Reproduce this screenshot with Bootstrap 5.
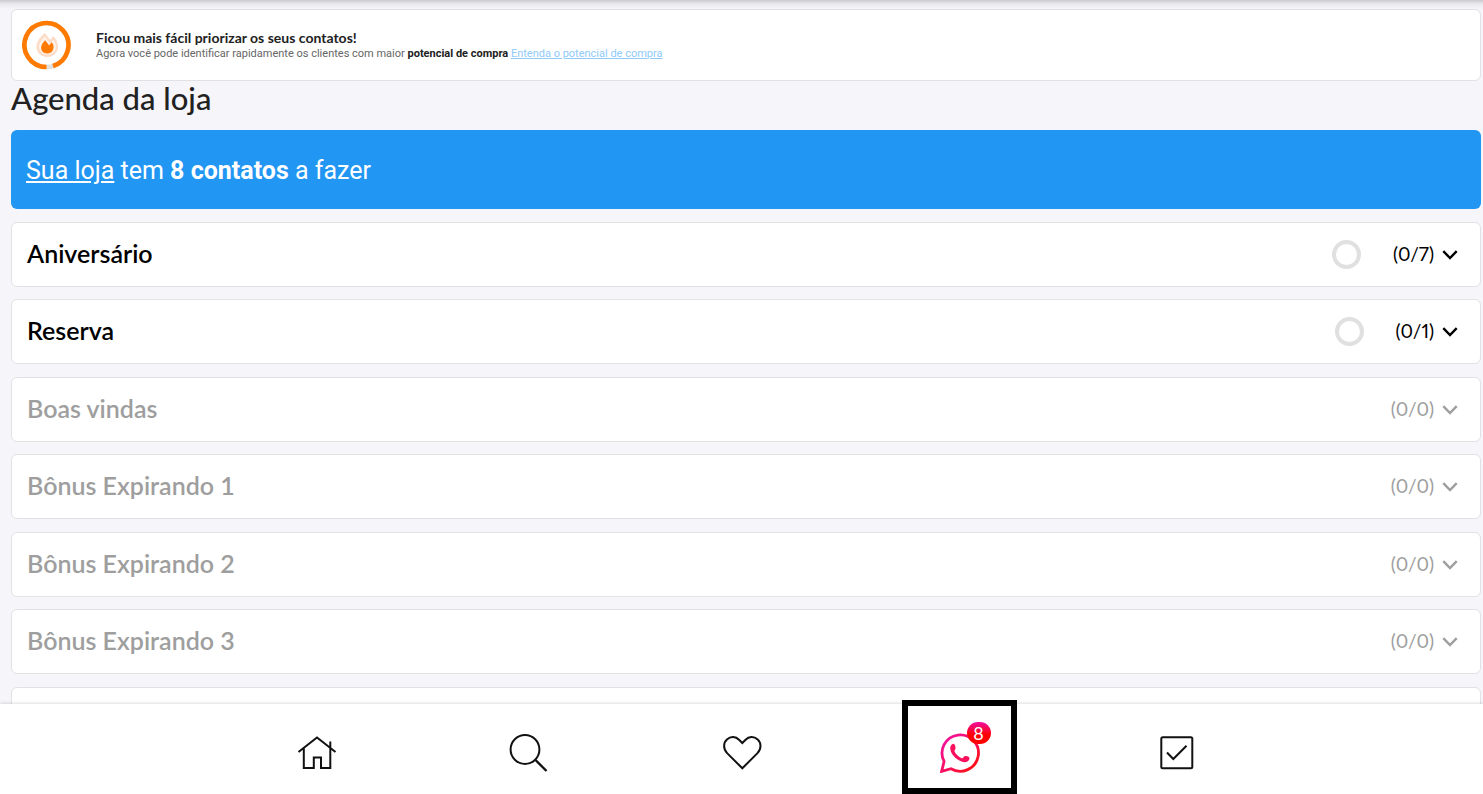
<!DOCTYPE html>
<html lang="pt-BR">
<head>
<meta charset="utf-8">
<meta name="viewport" content="width=device-width, initial-scale=1">
<title>Agenda da loja</title>
<link href="https://cdn.jsdelivr.net/npm/bootstrap@5.3.0/dist/css/bootstrap.min.css" rel="stylesheet">
<style>
  body { background: #f5f5fa; color: #212121; font-family: Lato, "Open Sans", sans-serif; }
  .agenda-main { min-height: 0; padding: 9px 2px 0 11px; scrollbar-width: none; }
  .agenda-main::-webkit-scrollbar { display: none; }
  .top-shade { height: 9px; background: linear-gradient(#cbcbd1, #e9e9ee 45%, #f5f5fa); }
  .panel { background: #fff; border: 1px solid #e2e2e4; border-radius: 6px; }
  .notice { height: 72px; padding: 0 10px; gap: 24px; }
  .notice-title { font-size: 14px; line-height: 16px; font-weight: 700; }
  .notice-text { font: 11px/15px Roboto, sans-serif; color: #666; }
  .notice-text strong { color: #212121; }
  .notice-text a { color: #90caf9; }
  .page-title { font-size: 31px; line-height: 34px; font-weight: 500; margin-bottom: 15px; }
  .banner { background: #2196f3; border-radius: 6px; height: 79px; padding: 2px 15px 0; margin-bottom: 13px; font: 25px/32px Roboto, sans-serif; }
  .agenda-row { height: 65px; padding: 0 22px 0 15px; margin-bottom: 13px; color: #000; }
  .agenda-row:nth-child(odd) { margin-bottom: 12px; }
  .agenda-row.is-empty { color: #9e9e9e; }
  .row-name { font-size: 25px; line-height: 32px; font-weight: 600; padding-bottom: 4px; }
  .row-count { font-size: 19px; line-height: 24px; font-weight: 400; font-variant-numeric: proportional-nums; margin-right: 8px; padding-bottom: 2px; }
  .ring { width: 29px; height: 29px; border: 4px solid #e0e0e0; border-radius: 50%; margin-right: 32px; }
  .tabs { height: 90px; background: #fff; box-shadow: 0 -1px 3px rgba(0,0,0,.13); display: grid; z-index: 2;
    grid-template-columns: 212fr 210fr 212fr 216fr 219fr 216fr 198fr; }
  .tabs a { color: #111; padding-top: 8px; }
  .tabs a:first-child { grid-column-start: 2; }
  .active-frame { position: absolute; inset: -4px auto auto 50%; width: 115px; height: 94px; margin-left: -58px; border: 6px solid #000; }
  .count-badge { position: absolute; left: 27px; top: -11px; width: 24px; height: 22px; border-radius: 11px;
    background: linear-gradient(#f010a0, #f00 60%); color: #fff; font-size: 18px; line-height: 22px; }
</style>
</head>
<body class="vh-100 d-flex flex-column overflow-hidden">
<div class="top-shade position-absolute top-0 start-0 w-100"></div>
<main class="agenda-main flex-grow-1 overflow-auto position-relative">
  <section class="panel notice d-flex align-items-center">
    <svg width="50" height="50" viewBox="0 0 50 50" aria-hidden="true">
      <circle cx="24.500" cy="25" r="22" fill="none" stroke="#e0e0e0" stroke-width="4.500"/>
      <path d="M31 46A22 22 0 1 0 24.500 47" fill="none" stroke="#ff7a00" stroke-width="4.600"/>
      <path d="M22.9 13L28.2 20L31.2 16C34.2 19 36 22.6 36 26.6C36 32.8 31.3 37 25.4 37C19.2 37 14.4 32.8 14.4 26.6C14.4 21.3 18.9 16.5 22.9 13Z" fill="#fddcc7"/>
      <path d="M23 16.8L28.2 23.4L31.2 19.8C33 22 34 24.2 34 26.8C34 31.2 30.4 34.6 25.4 34.6C20.6 34.6 17 31.2 17 26.8C17 23.3 19.7 19.8 23 16.8Z" fill="#fff" opacity=".65"/>
      <path d="M23.2 20.2L27.2 25.5L29.5 22.2L31.2 24.2C32.5 29.4 30 33.4 25.4 33.4C21 33.4 18.6 30.3 19.2 26.7C19.6 24.2 21.3 21.9 23.2 20.2Z" fill="#ff7a00"/>
    </svg>
    <div>
      <div class="notice-title">Ficou mais fácil priorizar os seus contatos!</div>
      <div class="notice-text">Agora você pode identificar rapidamente os clientes com maior <strong>potencial de compra</strong> <a href="#">Entenda o potencial de compra</a></div>
    </div>
  </section>
  <h1 class="page-title">Agenda da loja</h1>
  <div class="banner d-flex align-items-center text-white">
    <div><a href="#" class="text-white">Sua loja</a> tem <strong>8 contatos</strong> a fazer</div>
  </div>
  <div>
    <button type="button" class="agenda-row panel w-100 d-flex align-items-center" aria-expanded="false">
      <span class="row-name me-auto">Aniversário</span><span class="ring"></span><span class="row-count">(0/7)</span>
      <svg width="16" height="10" viewBox="0 0 16 10" fill="none" stroke="currentColor" stroke-width="2.4" aria-hidden="true"><path d="M1.3 1.2L8 8L14.7 1.2"/></svg>
    </button>
    <button type="button" class="agenda-row panel w-100 d-flex align-items-center" aria-expanded="false">
      <span class="row-name me-auto">Reserva</span><span class="ring"></span><span class="row-count">(0/1)</span>
      <svg width="16" height="10" viewBox="0 0 16 10" fill="none" stroke="currentColor" stroke-width="2.4" aria-hidden="true"><path d="M1.3 1.2L8 8L14.7 1.2"/></svg>
    </button>
    <button type="button" class="agenda-row is-empty panel w-100 d-flex align-items-center" aria-expanded="false">
      <span class="row-name me-auto">Boas vindas</span><span class="row-count">(0/0)</span>
      <svg width="16" height="10" viewBox="0 0 16 10" fill="none" stroke="currentColor" stroke-width="2.4" aria-hidden="true"><path d="M1.3 1.2L8 8L14.7 1.2"/></svg>
    </button>
    <button type="button" class="agenda-row is-empty panel w-100 d-flex align-items-center" aria-expanded="false">
      <span class="row-name me-auto">Bônus Expirando 1</span><span class="row-count">(0/0)</span>
      <svg width="16" height="10" viewBox="0 0 16 10" fill="none" stroke="currentColor" stroke-width="2.4" aria-hidden="true"><path d="M1.3 1.2L8 8L14.7 1.2"/></svg>
    </button>
    <button type="button" class="agenda-row is-empty panel w-100 d-flex align-items-center" aria-expanded="false">
      <span class="row-name me-auto">Bônus Expirando 2</span><span class="row-count">(0/0)</span>
      <svg width="16" height="10" viewBox="0 0 16 10" fill="none" stroke="currentColor" stroke-width="2.4" aria-hidden="true"><path d="M1.3 1.2L8 8L14.7 1.2"/></svg>
    </button>
    <button type="button" class="agenda-row is-empty panel w-100 d-flex align-items-center" aria-expanded="false">
      <span class="row-name me-auto">Bônus Expirando 3</span><span class="row-count">(0/0)</span>
      <svg width="16" height="10" viewBox="0 0 16 10" fill="none" stroke="currentColor" stroke-width="2.4" aria-hidden="true"><path d="M1.3 1.2L8 8L14.7 1.2"/></svg>
    </button>
    <div class="agenda-row panel"></div>
  </div>
</main>
<nav class="tabs flex-shrink-0 position-relative">
  <a href="#" class="d-flex justify-content-center align-items-center" aria-label="Início">
    <svg width="40" height="40" viewBox="0 0 40 40" fill="none" stroke="currentColor" stroke-width="2"><path d="M1.5 19L20 4.5L38.5 19M6.8 15.5V35H16.8V24.6H24V35H33.3V8.5"/></svg>
  </a>
  <a href="#" class="d-flex justify-content-center align-items-center" aria-label="Buscar">
    <svg width="40" height="40" viewBox="0 0 40 40" fill="none" stroke="currentColor" stroke-width="2"><circle cx="17" cy="16.500" r="14.400"/><path d="M27.500 27L38.500 38" stroke-width="2.400"/></svg>
  </a>
  <a href="#" class="d-flex justify-content-center align-items-center" aria-label="Favoritos">
    <svg width="40" height="40" viewBox="0 0 40 40" fill="none" stroke="currentColor" stroke-width="2"><path d="M20.300 35.300L5.100 20.100C1 16 1.300 9.700 4.900 6.500C8.800 3 13.800 3.500 17 6.700L20.300 10L23.600 6.700C26.800 3.500 31.800 3 35.700 6.500C39.300 9.700 39.600 16 35.500 20.100Z"/></svg>
  </a>
  <a href="#" class="d-flex justify-content-center align-items-center position-relative text-decoration-none" aria-label="Contatos, 8 pendentes" aria-current="page">
    <span class="active-frame"></span>
    <span class="position-relative d-flex text-center">
      <svg width="40" height="40" viewBox="0 0 40 40" fill="none">
        <defs><linearGradient id="pink" x1="0" y1="0" x2="1" y2="1"><stop offset="0" stop-color="#f013a8"/><stop offset=".55" stop-color="#f8105c"/><stop offset="1" stop-color="#f10"/></linearGradient></defs>
        <path d="M1.600 38.400L4.100 28.400A18.200 18.200 0 1 1 11 35.700Z" stroke="url(#pink)" stroke-width="2.800"/>
        <path d="M13.200 10.800C14.500 10.800 15.400 12.500 15.500 14.700C15.600 16.400 14.500 17.300 14.300 18.100C15.800 21.700 18.800 24.300 22.300 25.500C23.200 24.800 23.700 23.100 25.700 23.100C28 23.200 29.500 24.100 29.500 25.200C29.300 27.600 27 29.200 24.500 29.200C18.500 28.800 11.400 22.700 10.300 16.300C9.900 13.600 11 11.200 13.200 10.800Z" fill="#f8105c"/>
      </svg>
      <span class="count-badge">8</span>
    </span>
  </a>
  <a href="#" class="d-flex justify-content-center align-items-center" aria-label="Tarefas">
    <svg width="40" height="40" viewBox="0 0 40 40" fill="none" stroke="currentColor" stroke-width="2"><rect x="4.300" y="4.300" width="31" height="31" rx="1.500"/><path d="M10 19.500L16.300 26L29.500 12.800"/></svg>
  </a>
</nav>
<script src="https://cdn.jsdelivr.net/npm/bootstrap@5.3.0/dist/js/bootstrap.bundle.min.js"></script>
</body>
</html>
